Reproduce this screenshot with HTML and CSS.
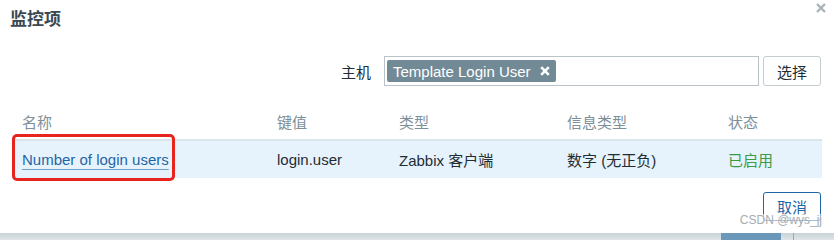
FILE: index.html
```html
<!DOCTYPE html>
<html lang="zh-CN">
<head>
<meta charset="utf-8">
<title>监控项</title>
<link rel="stylesheet" href="styles.css">
</head>
<body>
<div class="dialog">
  <div class="head">
    <h4 class="title">监控项</h4>
    <svg class="close" width="10" height="10" viewBox="0 0 10 10"><path d="M1 1L9 9M9 1L1 9" stroke="#aab3b8" stroke-width="2.4" stroke-linecap="butt"/></svg>
  </div>
  <div class="filter">
    <label class="flabel">主机</label>
    <div class="multiselect">
      <span class="tag">Template Login User<svg class="tag-x" width="10" height="10" viewBox="0 0 10 10"><path d="M1.2 1.2L8.8 8.8M8.8 1.2L1.2 8.8" stroke="#ffffff" stroke-width="2.6"/></svg></span>
    </div>
    <button class="btn-alt">选择</button>
  </div>
  <table class="list">
    <thead>
      <tr>
        <th class="c1">名称</th>
        <th class="c2">键值</th>
        <th class="c3">类型</th>
        <th class="c4">信息类型</th>
        <th class="c5">状态</th>
      </tr>
    </thead>
    <tbody>
      <tr class="row">
        <td class="c1"><a class="link">Number of login users</a><span class="mark"></span></td>
        <td class="c2">login.user</td>
        <td class="c3">Zabbix 客户端</td>
        <td class="c4">数字 (无正负)</td>
        <td class="c5 green">已启用</td>
      </tr>
    </tbody>
  </table>
  <div class="footer">
    <button class="btn-cancel">取消</button>
    <span class="watermark">CSDN @wys_jj</span>
  </div>
  <div class="bottom">
    <span class="bseg"></span>
    <span class="bline"></span>
  </div>
</div>
</body>
</html>
```
FILE: styles.css
```css
* { box-sizing: border-box; }
html, body { margin: 0; padding: 0; background: #ffffff; }
body {
  width: 834px;
  height: 240px;
  overflow: hidden;
  font-family: Arial, "Liberation Sans", "Noto Sans CJK SC", sans-serif;
  font-size: 15px;
  color: #1f2c33;
}
.dialog { position: relative; width: 834px; height: 240px; }
.head {
  display: flex;
  justify-content: space-between;
  align-items: flex-start;
  height: 48px;
}
.title {
  margin: 9px 0 0 10px;
  font-size: 17px;
  font-weight: bold;
  color: #3a4852;
  line-height: 22px;
}
.close { margin: 3px 8px 0 0; }
.filter {
  display: flex;
  align-items: center;
  justify-content: flex-end;
  padding-right: 13px;
  margin-top: 8px;
  height: 30px;
}
.flabel {
  font-size: 15px;
  color: #1f2c33;
  margin-right: 13px;
}
.multiselect {
  width: 375px;
  height: 30px;
  border: 1px solid #b9c3c8;
  padding: 3px 2px;
  display: flex;
  align-items: center;
}
.tag {
  display: inline-flex;
  align-items: center;
  height: 22px;
  background: #728a96;
  color: #ffffff;
  border-radius: 2px;
  padding: 0 5px 0 6px;
  font-size: 15px;
}
.tag-x { margin-left: 9px; margin-right: 1px; }
.btn-alt {
  margin-left: 4px;
  width: 58px;
  height: 30px;
  background: #ffffff;
  border: 1px solid #c4ccd0;
  border-radius: 3px;
  font-family: inherit;
  font-size: 15px;
  color: #1f2c33;
  padding: 0;
}
.list {
  margin: 19px 12px 0 12px;
  width: 810px;
  border-collapse: collapse;
}
.list th {
  text-align: left;
  font-weight: normal;
  color: #7d8f99;
  height: 35px;
  padding: 0 0 2px 0;
  vertical-align: middle;
  border-bottom: 2px solid #dbe5ec;
}
.list td { height: 38px; padding: 0; vertical-align: middle; }
.row { background: #e6f3fc; }
.c1 { width: 265px; padding-left: 10px !important; position: relative; }
.c2 { width: 122px; }
.c3 { width: 168px; }
.c4 { width: 161px; }
.link {
  color: #1f65a6;
  text-decoration: underline;
  text-decoration-color: #6aa0c9;
  text-underline-offset: 4px;
}
.green { color: #3a9a45; }
.mark {
  position: absolute;
  left: 0;
  top: -7px;
  width: 163px;
  height: 47px;
  border: 3px solid #e8241f;
  border-radius: 5px;
}
.footer {
  display: flex;
  justify-content: flex-end;
  padding-right: 13px;
  margin-top: 14px;
  position: relative;
}
.btn-cancel {
  width: 58px;
  height: 29px;
  background: #ffffff;
  border: 1px solid #1f65a6;
  border-radius: 3px;
  color: #1f65a6;
  font-family: inherit;
  font-size: 15px;
  padding: 0;
}
.watermark {
  position: absolute;
  right: 12px;
  top: 22px;
  font-size: 12px;
  color: #a7adb1;
  background: rgba(255,255,255,0.6);
  line-height: 12px;
}
.bottom {
  position: absolute;
  left: 0;
  bottom: 0;
  width: 834px;
  height: 7px;
  background: linear-gradient(#c9d3d9, #dfe5e8);
  display: flex;
}
.bseg { margin-left: 721px; width: 60px; height: 7px; background: #6b98b9; }
.bline { margin-left: 12px; width: 1px; height: 7px; background: #9aa8b0; }
```
